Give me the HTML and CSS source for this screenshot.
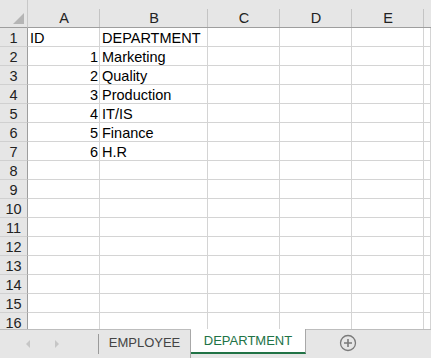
FILE: index.html
```html
<!DOCTYPE html>
<html lang="en">
<head>
    <meta charset="UTF-8">
    <title>DEPARTMENT</title>
    <link rel="stylesheet" href="styles.css">
</head>
<body>
    <div class="sheet">
        <div class="grid">
            <div class="corner"><span class="corner-mark"></span></div>
            <div class="col-head">A</div>
            <div class="col-head">B</div>
            <div class="col-head">C</div>
            <div class="col-head">D</div>
            <div class="col-head">E</div>
            <div class="col-head last"></div>

            <div class="row-head">1</div><div class="cell">ID</div><div class="cell">DEPARTMENT</div><div class="cell"></div><div class="cell"></div><div class="cell"></div><div class="cell"></div>
            <div class="row-head">2</div><div class="cell num">1</div><div class="cell">Marketing</div><div class="cell"></div><div class="cell"></div><div class="cell"></div><div class="cell"></div>
            <div class="row-head">3</div><div class="cell num">2</div><div class="cell">Quality</div><div class="cell"></div><div class="cell"></div><div class="cell"></div><div class="cell"></div>
            <div class="row-head">4</div><div class="cell num">3</div><div class="cell">Production</div><div class="cell"></div><div class="cell"></div><div class="cell"></div><div class="cell"></div>
            <div class="row-head">5</div><div class="cell num">4</div><div class="cell">IT/IS</div><div class="cell"></div><div class="cell"></div><div class="cell"></div><div class="cell"></div>
            <div class="row-head">6</div><div class="cell num">5</div><div class="cell">Finance</div><div class="cell"></div><div class="cell"></div><div class="cell"></div><div class="cell"></div>
            <div class="row-head">7</div><div class="cell num">6</div><div class="cell">H.R</div><div class="cell"></div><div class="cell"></div><div class="cell"></div><div class="cell"></div>
            <div class="row-head">8</div><div class="cell"></div><div class="cell"></div><div class="cell"></div><div class="cell"></div><div class="cell"></div><div class="cell"></div>
            <div class="row-head">9</div><div class="cell"></div><div class="cell"></div><div class="cell"></div><div class="cell"></div><div class="cell"></div><div class="cell"></div>
            <div class="row-head">10</div><div class="cell"></div><div class="cell"></div><div class="cell"></div><div class="cell"></div><div class="cell"></div><div class="cell"></div>
            <div class="row-head">11</div><div class="cell"></div><div class="cell"></div><div class="cell"></div><div class="cell"></div><div class="cell"></div><div class="cell"></div>
            <div class="row-head">12</div><div class="cell"></div><div class="cell"></div><div class="cell"></div><div class="cell"></div><div class="cell"></div><div class="cell"></div>
            <div class="row-head">13</div><div class="cell"></div><div class="cell"></div><div class="cell"></div><div class="cell"></div><div class="cell"></div><div class="cell"></div>
            <div class="row-head">14</div><div class="cell"></div><div class="cell"></div><div class="cell"></div><div class="cell"></div><div class="cell"></div><div class="cell"></div>
            <div class="row-head">15</div><div class="cell"></div><div class="cell"></div><div class="cell"></div><div class="cell"></div><div class="cell"></div><div class="cell"></div>
            <div class="row-head">16</div><div class="cell"></div><div class="cell"></div><div class="cell"></div><div class="cell"></div><div class="cell"></div><div class="cell"></div>
        </div>
    </div>
    <div class="tabs">
        <div class="tab-nav">
            <svg width="6" height="10" viewBox="0 0 6 10"><path d="M5 1 L1 5 L5 9 Z" fill="#c6c6c6"/></svg>
            <svg width="6" height="10" viewBox="0 0 6 10"><path d="M1 1 L5 5 L1 9 Z" fill="#c6c6c6"/></svg>
        </div>
        <div class="tab">EMPLOYEE</div>
        <div class="tab active">DEPARTMENT</div>
        <div class="tab-add">
            <svg width="18" height="18" viewBox="0 0 18 18">
                <circle cx="9" cy="9" r="7.5" fill="none" stroke="#7a7a7a" stroke-width="1.3"/>
                <path d="M9 5 V13 M5 9 H13" stroke="#7a7a7a" stroke-width="1.6"/>
            </svg>
        </div>
    </div>
</body>
</html>
```

FILE: styles.css
```css
body {
    margin: 0;
    width: 431px;
    height: 358px;
    overflow: hidden;
    font-family: "Liberation Sans", Arial, sans-serif;
    background: #ffffff;
}
.sheet {
    height: 329px;
    overflow: hidden;
}
.grid {
    display: grid;
    grid-template-columns: 28px 72px 108px 72px 72px 72px 1fr;
    grid-template-rows: 28px;
    grid-auto-rows: 19px;
}
.corner {
    background: #e6e6e6;
    border-right: 1px solid #c8c8c8;
    border-bottom: 1px solid #9e9e9e;
    display: flex;
    justify-content: flex-end;
    align-items: flex-end;
    padding: 0 3px 3px 0;
}
.corner-mark {
    width: 0;
    height: 0;
    border-left: 11px solid transparent;
    border-bottom: 11px solid #b5b5b5;
}
.col-head {
    background: linear-gradient(#c4c4c4, #c4c4c4) right bottom / 1px 18px no-repeat, #e6e6e6;
    border-bottom: 1px solid #9e9e9e;
    color: #222;
    font-size: 14.5px;
    text-align: center;
    line-height: 16px;
    padding-top: 10px;
    box-sizing: border-box;
}
.col-head.last {
    background: #e6e6e6;
}
.row-head {
    background: #e6e6e6;
    border-right: 1px solid #9e9e9e;
    border-bottom: 1px solid #d0d0d0;
    color: #222;
    font-size: 14.5px;
    text-align: center;
    line-height: 18px;
    padding-top: 1px;
    overflow: hidden;
}
.cell {
    border-right: 1px solid #d4d4d4;
    border-bottom: 1px solid #d4d4d4;
    font-size: 14.5px;
    line-height: 18px;
    padding: 1px 2px 0;
    color: #000;
    white-space: nowrap;
    overflow: hidden;
}
.cell.num {
    text-align: right;
    padding-right: 1px;
}
.tabs {
    display: flex;
    height: 28px;
    background: #e6e6e6;
    border-top: 1px solid #bdbdbd;
    border-bottom: 1px solid #d0d0d0;
    font-size: 13px;
    color: #444;
}
.tab-nav {
    width: 99px;
    display: flex;
    align-items: center;
    gap: 23px;
    padding-left: 25px;
    box-sizing: border-box;
    border-right: 1px solid #9a9a9a;
    margin: 4px 0 4px;
}
.tab {
    width: 92px;
    box-sizing: border-box;
    border-right: 1px solid #a8a8a8;
    text-align: center;
    line-height: 26px;
}
.tab.active {
    width: 115px;
    margin-top: -1px;
    height: 25px;
    line-height: 24px;
    background: #ffffff;
    color: #217346;
    border-bottom: 2px solid #217346;
}
.tab-add {
    width: 84px;
    display: flex;
    justify-content: center;
    align-items: center;
    padding-bottom: 2px;
}
```
